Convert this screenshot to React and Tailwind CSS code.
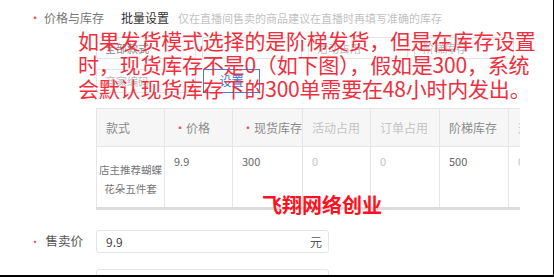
import React from 'react';

const FONT = { fontFamily: '"Noto Sans CJK SC", "Noto Sans", sans-serif' };

const headers = [
  { label: '款式', req: false, tone: 'text-[#8c8c8c]' },
  { label: '价格', req: true, tone: 'text-[#8c8c8c]' },
  { label: '现货库存', req: true, tone: 'text-[#8c8c8c]' },
  { label: '活动占用', req: false, tone: 'text-[#c4c4c4]' },
  { label: '订单占用', req: false, tone: 'text-[#c4c4c4]' },
  { label: '阶梯库存', req: false, tone: 'text-[#8c8c8c]' },
  { label: '运费模板', req: false, tone: 'text-[#c4c4c4]' },
];

const values = [
  { v: '9.9', tone: 'text-[#666]' },
  { v: '300', tone: 'text-[#666]' },
  { v: '0', tone: 'text-[#c4c4c4]' },
  { v: '0', tone: 'text-[#c4c4c4]' },
  { v: '500', tone: 'text-[#666]' },
  { v: '0', tone: 'text-[#c4c4c4]' },
];

const App = () => {
  return (
    <div
      className="relative w-[554px] h-[277px] overflow-hidden bg-white border-r border-b-2 border-black"
      style={FONT}
    >
      {/* top line */}
      <div className="flex items-center h-[18px] mt-[9px] pl-[29px] text-[12px] leading-none">
        <span className="text-[#f5475d] mr-[3px]">•</span>
        <span className="text-[#777]">价格与库存</span>
        <span className="ml-[17px] text-[#333]">批量设置</span>
        <span className="ml-[9px] text-[11px] text-[#c2c2c2]">仅在直播间售卖的商品建议在直播时再填写准确的库存</span>
      </div>

      {/* batch rows (mostly covered by the note) */}
      <div className="ml-[96px] mt-[10px] flex gap-[6px] h-[22px]">
        <div className="w-[100px] border border-[#e4e4e4] rounded-[2px] flex items-center pl-[8px] text-[11px] text-[#888]">全部款式</div>
        <div className="w-[100px] border border-[#e4e4e4] rounded-[2px]" />
        <div className="w-[100px] border border-[#e4e4e4] rounded-[2px] flex items-center pl-[8px] text-[11px] text-[#bbb]">活动占用</div>
        <div className="w-[100px] border border-[#e4e4e4] rounded-[2px] flex items-center pl-[8px] text-[11px] text-[#bbb]">阶梯库存</div>
      </div>
      <div className="ml-[96px] mt-[10px] flex items-center h-[24px]">
        <div className="w-[100px] h-full border border-[#e4e4e4] rounded-[2px] flex items-center pl-[8px] text-[11px] text-[#bbb]">商家编码</div>
        <div className="ml-[7px] w-[57px] h-full border border-[#4a7bdc] flex items-center justify-center text-[12px] text-[#3b6fd6]">设置</div>
      </div>

      {/* table */}
      <div className="ml-[96px] mt-[15px] w-[424px] overflow-hidden">
        <div className="grid grid-cols-[68px_68px_70px_68px_69px_69px_68px] w-[480px] border-l border-t border-[#e6e6e6] text-[12px]">
          {headers.map((h) => (
            <div
              key={h.label}
              className="h-[38px] bg-[#f6f6f6] border-r border-b border-[#e6e6e6] flex items-center pl-[9px] whitespace-nowrap"
            >
              {h.req && <span className="text-[#f5475d]">•</span>}
              <span className={h.tone}>{h.label}</span>
            </div>
          ))}
          <div className="h-[60px] border-r border-[#e6e6e6] flex flex-col items-center justify-center pt-[4px] text-[10.5px] leading-[19px] text-[#777] whitespace-nowrap">
            <span>店主推荐蝴蝶</span>
            <span>花朵五件套</span>
          </div>
          {values.map((c, i) => (
            <div
              key={i}
              className={`h-[60px] border-r border-[#e6e6e6] pl-[9px] pt-[6px] text-[11px] ${c.tone}`}
            >
              {c.v}
            </div>
          ))}
        </div>
        <div className="h-[3px] bg-[#dcdcdc]" />
      </div>

      {/* price row */}
      <div className="flex items-center mt-[20px] h-[23px]">
        <div className="w-[83px] flex justify-end items-center text-[12.5px] text-[#555]">
          <span className="text-[#f5475d] mr-[5px] text-[11px]">•</span>
          售卖价
        </div>
        <div className="ml-[13px] w-[233px] h-full border border-[#e4e4e4] rounded-[3px] flex items-center justify-between pl-[9px] pr-[6px] text-[12px] text-[#444]">
          <span>9.9</span>
          <span className="text-[#555]">元</span>
        </div>
      </div>
      <div className="ml-[96px] mt-[16px] w-[233px] h-[24px] border border-[#e4e4e4] rounded-[3px]" />

      {/* red note overlay */}
      <div className="absolute left-[78px] top-[28px] w-[470px] text-[21px] leading-[24px] text-[#ef2f3e] tracking-[-0.2px]">
        <div className="whitespace-nowrap">如果发货模式选择的是阶梯发货，但是在库存设置</div>
        <div className="whitespace-nowrap">时，现货库存不是0（如下图），假如是300，系统</div>
        <div className="whitespace-nowrap">会默认现货库存下的300单需要在48小时内发出。</div>
      </div>

      {/* watermark */}
      <div className="absolute left-[262px] top-[193px] text-[20px] font-bold leading-[24px] text-[#ff1020] whitespace-nowrap">
        飞翔网络创业
      </div>
    </div>
  );
};

export default App;
